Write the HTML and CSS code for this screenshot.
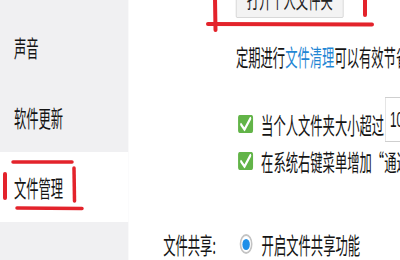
FILE: index.html
```html
<!DOCTYPE html>
<html lang="zh-CN">
<head>
<meta charset="utf-8">
<title>文件管理</title>
<link rel="stylesheet" href="styles.css">
</head>
<body>
<div class="stage">
  <nav class="sidebar">
    <div class="nav-item">声音</div>
    <div class="nav-item">软件更新</div>
    <div class="nav-item active">文件管理</div>
    <div class="nav-item"></div>
  </nav>
  <main class="main">
    <div class="row row-btn">
      <span class="label"></span>
      <button class="btn">打开个人文件夹</button>
    </div>
    <div class="row row-desc">
      <span class="label"></span>
      <p class="desc">定期进行<span class="link">文件清理</span>可以有效节省磁盘空间</p>
    </div>
    <div class="row row-check1">
      <span class="label"></span>
      <span class="checkbox"><svg width="28" height="18" viewBox="0 0 28 18"><path d="M5.5 9.5 L12 14.5 L23 3.5" fill="none" stroke="#fff" stroke-width="3.2" stroke-linecap="round" stroke-linejoin="round"/></svg></span>
      <span class="opt">当个人文件夹大小超过</span>
      <span class="input">10</span>
    </div>
    <div class="row row-check2">
      <span class="label"></span>
      <span class="checkbox"><svg width="28" height="18" viewBox="0 0 28 18"><path d="M5.5 9.5 L12 14.5 L23 3.5" fill="none" stroke="#fff" stroke-width="3.2" stroke-linecap="round" stroke-linejoin="round"/></svg></span>
      <span class="opt">在系统右键菜单增加“通过文件管理打开”</span>
    </div>
    <div class="row row-share">
      <span class="label">文件共享:</span>
      <span class="radio"><span class="dot"></span></span>
      <span class="opt">开启文件共享功能</span>
    </div>
  </main>
</div>
<svg class="marks" width="400" height="260" viewBox="0 0 400 260">
  <g fill="none" stroke="#e3232b" stroke-linecap="round">
    <path d="M215 -2 L215.5 30" stroke-width="4"/>
    <path d="M208 24 L372 24.5" stroke-width="4"/>
    <path d="M365 -2 L365 15" stroke-width="4"/>
    <path d="M13 162 L72 162" stroke-width="3.5"/>
    <path d="M5 174 L5 198" stroke-width="4"/>
    <path d="M74 168 L74.5 201" stroke-width="3.5"/>
    <path d="M17 208 L82 208.5" stroke-width="3.5"/>
  </g>
</svg>
</body>
</html>
```
FILE: styles.css
```css
html, body {
  margin: 0;
  padding: 0;
  overflow: hidden;
  background: #fff;
}
body {
  position: relative;
  width: 400px;
  height: 260px;
  font-family: "Noto Sans CJK SC", "Noto Sans", sans-serif;
  color: #141414;
}
.stage {
  display: flex;
  width: 748px;
  height: 260px;
  overflow: hidden;
  transform: scaleX(0.535);
  transform-origin: 0 0;
  font-size: 23px;
  line-height: 24px;
}
.sidebar {
  width: 240px;
  flex: none;
  background: #f0f0f2;
  padding-top: 12px;
  box-sizing: border-box;
  display: flex;
  flex-direction: column;
}
.nav-item {
  height: 70px;
  flex: none;
  display: flex;
  align-items: center;
  padding-left: 26px;
}
.nav-item.active {
  background: #fff;
}
.main {
  flex: 1;
  padding-left: 65px;
  display: flex;
  flex-direction: column;
  min-width: 0;
}
.row {
  display: flex;
  align-items: center;
  white-space: nowrap;
  flex: none;
}
.label {
  width: 136px;
  flex: none;
  box-sizing: border-box;
  padding-right: 39px;
  text-align: right;
}
.row-btn {
  margin-top: -22px;
  height: 40px;
}
.btn {
  width: 201px;
  height: 40px;
  font: inherit;
  color: #222;
  background: #f3f3f3;
  border: 1px solid #cdcdcd;
  border-radius: 2px;
  padding: 0;
}
.row-desc {
  margin-top: 26px;
  height: 24px;
}
.desc {
  margin: 0;
}
.link {
  color: #1f86d4;
}
.row-check1 {
  margin-top: 38px;
  height: 36px;
}
.row-check2 {
  margin-top: 1px;
  height: 36px;
}
.row-share {
  margin-top: 47px;
  height: 36px;
}
.checkbox {
  width: 28px;
  height: 18px;
  margin-left: 4px;
  margin-right: 15px;
  background: #62b448;
  border-radius: 3px;
  flex: none;
  display: flex;
}
.input {
  align-self: flex-start;
  margin-top: -9px;
  margin-left: 2px;
  height: 45px;
  width: 95px;
  box-sizing: border-box;
  border: 1px solid #cfcfcf;
  padding-left: 8px;
  display: flex;
  align-items: center;
  font-family: "Liberation Sans", sans-serif;
  font-size: 22px;
}
.radio {
  width: 24px;
  height: 20px;
  box-sizing: border-box;
  margin-left: 7px;
  margin-right: 17px;
  border-style: solid;
  border-color: #c3c3c3;
  border-width: 2px 3.7px;
  border-radius: 50%;
  background: #fff;
  display: flex;
  align-items: center;
  justify-content: center;
  flex: none;
}
.dot {
  width: 14px;
  height: 11px;
  border-radius: 50%;
  background: #1e8fe8;
}
.marks {
  position: absolute;
  left: 0;
  top: 0;
  pointer-events: none;
}
```
